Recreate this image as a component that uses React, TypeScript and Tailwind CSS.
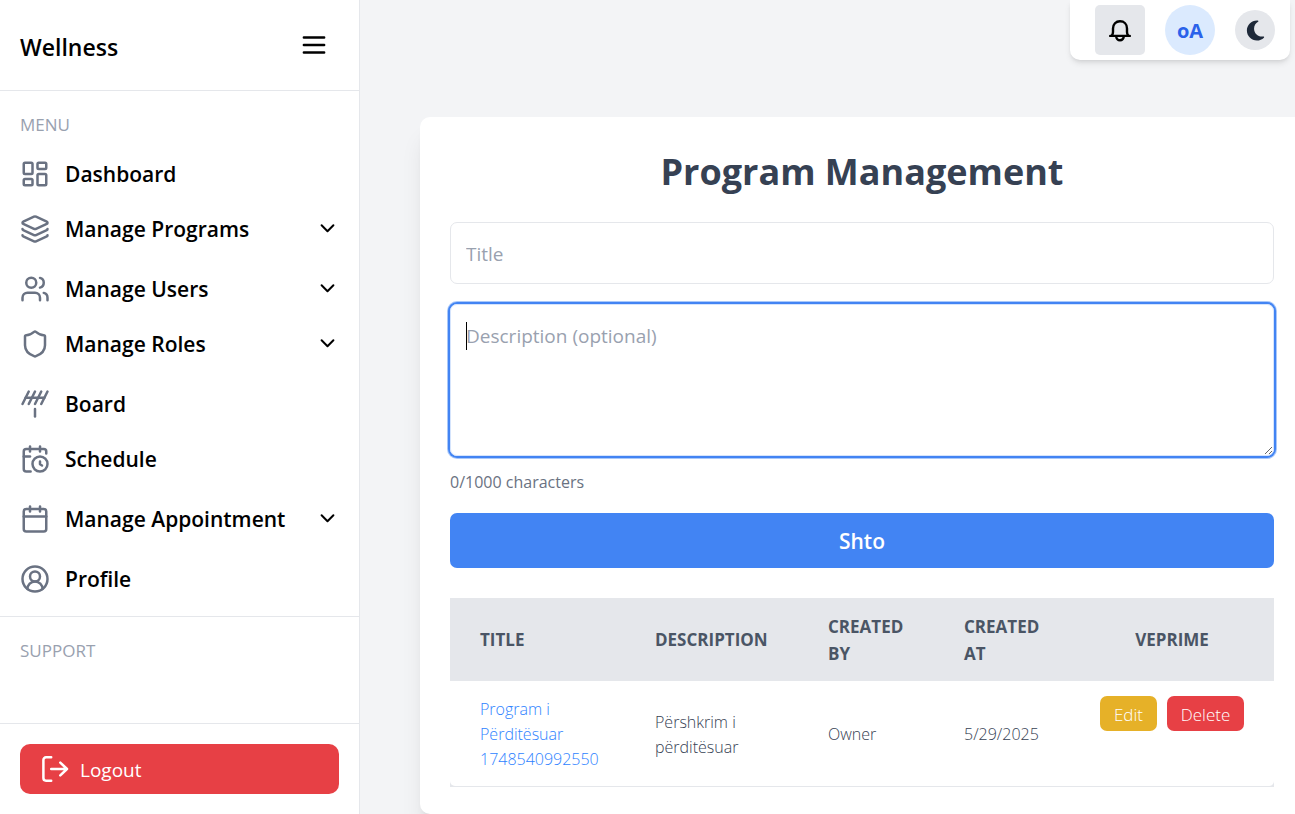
import React from "react";
import {
  Antenna,
  Calendar,
  CalendarClock,
  CircleUserRound,
  Layers,
  LayoutDashboard,
  Shield,
  Users,
  type LucideIcon,
} from "lucide-react";
import { FaMoon } from "react-icons/fa6";

type NavItem = { label: string; icon: LucideIcon; expandable?: boolean };

const navGroups: NavItem[][] = [
  [
    { label: "Dashboard", icon: LayoutDashboard },
    { label: "Manage Programs", icon: Layers, expandable: true },
  ],
  [
    { label: "Manage Users", icon: Users, expandable: true },
    { label: "Manage Roles", icon: Shield, expandable: true },
  ],
  [
    { label: "Board", icon: Antenna },
    { label: "Schedule", icon: CalendarClock },
  ],
  [{ label: "Manage Appointment", icon: Calendar, expandable: true }],
  [{ label: "Profile", icon: CircleUserRound }],
];

const programs = [
  {
    title: "Program i Përditësuar 1748540992550",
    description: "Përshkrim i përditësuar",
    createdBy: "Owner",
    createdAt: "5/29/2025",
  },
];

function MenuIcon() {
  return (
    <svg className="size-[30px]" viewBox="0 0 24 24" fill="none" stroke="currentColor" strokeWidth="2" strokeLinecap="round" aria-hidden="true">
      <path d="M3.9 6h16.2M3.9 12h16.2M3.9 18h16.2" />
    </svg>
  );
}

function ChevronIcon() {
  return (
    <svg className="size-5 shrink-0" viewBox="0 0 20 20" fill="none" stroke="currentColor" strokeWidth="2" strokeLinecap="round" strokeLinejoin="round" aria-hidden="true">
      <path d="M2.6 6.3 8.5 12.2 14.4 6.3" />
    </svg>
  );
}

function BellIcon() {
  return (
    <svg className="size-[30px]" viewBox="0 0 30 30" fill="none" stroke="currentColor" strokeWidth="2.4" strokeLinecap="round" strokeLinejoin="round" aria-hidden="true">
      <path d="M5.2 20.9h19.6M6.8 20.6C7.7 19.6 8 18.4 8 17v-3.6C8 9.2 10.9 6.3 15 6.3s7 2.9 7 7.1V17c0 1.4.3 2.6 1.2 3.6" />
      <path d="M11.2 21.3a3.8 4 0 0 0 7.6 0" />
    </svg>
  );
}

function LogoutIcon() {
  return (
    <svg className="size-[30px]" viewBox="0 0 30 30" fill="none" stroke="currentColor" strokeWidth="2.5" strokeLinecap="round" strokeLinejoin="round" aria-hidden="true">
      <path d="M11.2 3.3H6a2.6 2.6 0 0 0-2.6 2.6v18.2a2.6 2.6 0 0 0 2.6 2.6h5.2" />
      <path d="M11.2 15H27M20.3 8.6 27 15l-6.700 6.400" />
    </svg>
  );
}

function Sidebar() {
  return (
    <aside className="flex w-[360px] shrink-0 flex-col border-r border-gray-200 bg-white text-black">
      <div className="flex h-[91px] items-center justify-between border-b border-gray-200 pr-[30px] pl-5">
        <span className="pt-1 text-[23px] leading-8 font-semibold">Wellness</span>
        <button type="button" aria-label="Toggle menu">
          <MenuIcon />
        </button>
      </div>

      <nav aria-label="Main" className="px-5 pt-5 pb-3">
        <h2 className="mb-[10px] text-[17px] leading-7 text-gray-400">MENU</h2>
        <ul className="flex flex-col gap-[10px]">
          {navGroups.map((group) => (
            <li key={group[0].label}>
              <ul className="flex flex-col gap-[5px]">
                {group.map(({ label, icon: Icon, expandable }) => (
                  <li key={label}>
                    {expandable ? (
                      <button type="button" className="flex h-[50px] w-full items-center gap-[15px] text-left">
                        <Icon size={30} className="shrink-0 text-gray-500" />
                        <span className="flex-1 text-[21px] leading-8 font-semibold whitespace-nowrap">{label}</span>
                        <ChevronIcon />
                      </button>
                    ) : (
                      <a href="#" className="flex h-[50px] items-center gap-[15px]">
                        <Icon size={30} className="shrink-0 text-gray-500" />
                        <span className="text-[21px] leading-8 font-semibold">{label}</span>
                      </a>
                    )}
                  </li>
                ))}
              </ul>
            </li>
          ))}
        </ul>
      </nav>

      <section className="flex-1 border-t border-gray-200 px-5 pt-5">
        <h2 className="text-[17px] leading-7 text-gray-400">SUPPORT</h2>
      </section>

      <div className="border-t border-gray-200 p-5">
        <button type="button" className="flex h-[50px] w-full items-center gap-[10px] rounded-[10px] bg-[#e74045] px-5 text-white">
          <LogoutIcon />
          <span className="pt-0.5 text-[19px] leading-7">Logout</span>
        </button>
      </div>
    </aside>
  );
}

function TopBar() {
  return (
    <header className="flex justify-end pr-[5px]">
      <div className="flex h-[60px] items-center gap-5 rounded-b-[10px] bg-white pr-[15px] pl-[25px] shadow-md">
        <button type="button" aria-label="Notifications" className="flex size-[50px] items-center justify-center rounded-[5px] bg-gray-200 text-black">
          <BellIcon />
        </button>
        <button type="button" aria-label="Account" className="flex size-[50px] items-center justify-center rounded-full bg-blue-100 pt-0.5 text-[20px] font-bold text-[#2b62ea]">
          oA
        </button>
        <button type="button" aria-label="Dark mode" className="flex size-10 items-center justify-center rounded-full bg-gray-200 text-gray-800">
          <FaMoon size={23} />
        </button>
      </div>
    </header>
  );
}

function ProgramForm() {
  return (
    <form className="flex flex-col" onSubmit={(event) => event.preventDefault()}>
      <input
        type="text"
        aria-label="Title"
        placeholder="Title"
        className="h-[62px] w-full rounded-[7px] border border-gray-200 px-[15px] pt-0.5 text-[19px] placeholder:text-gray-400 focus:outline-none"
      />
      <div className="relative mt-5 flex">
        <textarea
          aria-label="Description"
          placeholder="Description (optional)"
          className="h-[152px] w-full rounded-[7px] border border-[#d5e4fc] px-[15px] py-4 text-[19px] leading-[30px] caret-transparent shadow-[0_0_0_2px_#4284f3,0_0_0_3px_#a9c8fa] outline-none placeholder:text-gray-400"
        />
        <span className="absolute top-[18px] left-4 h-7 w-px bg-black" aria-hidden="true" />
      </div>
      <p className="mt-3 text-[16px] leading-7 text-gray-500">0/1000 characters</p>
      <button type="submit" className="mt-[17px] h-[55px] w-full rounded-[7px] bg-[#4284f3] pt-0.5 text-[21px] font-semibold text-white">
        Shto
      </button>
    </form>
  );
}

function ProgramTable() {
  return (
    <div className="mt-[30px] border-b border-gray-200 bg-gray-200">
      <table className="w-full table-fixed border-collapse">
        <thead>
          <tr className="h-[83px] text-left text-[17px] leading-[27px] text-gray-600 uppercase">
            <th scope="col" className="w-[175px] pl-[30px] font-bold">Title</th>
            <th scope="col" className="w-[173px] pl-[30px] font-bold">Description</th>
            <th scope="col" className="w-[136px] pl-[30px] pr-5 font-bold">Created By</th>
            <th scope="col" className="w-[136px] pl-[30px] pr-5 font-bold">Created At</th>
            <th scope="col" className="px-[30px] text-center font-bold">Veprime</th>
          </tr>
        </thead>
        <tbody>
          {programs.map((program) => (
            <tr key={program.title} className="text-[16px] leading-[25px] font-light text-gray-700">
              <td className="rounded-bl-[5px] bg-white pt-4 pr-[25px] pb-[14px] pl-[30px]">
                <a href="#" className="text-blue-500">{program.title}</a>
              </td>
              <td className="bg-white px-[30px] pt-4 pb-[14px]">{program.description}</td>
              <td className="bg-white px-[30px] pt-4 pb-[14px]">{program.createdBy}</td>
              <td className="bg-white pt-4 pb-[14px] pl-[30px]">{program.createdAt}</td>
              <td className="rounded-br-[5px] bg-white px-[30px] py-[15px] align-top">
                <div className="flex gap-[10px] text-[17px] text-white">
                  <button type="button" className="h-[35px] w-[57px] rounded-[7px] bg-[#e6b128] pt-0.5">Edit</button>
                  <button type="button" className="h-[35px] w-[77px] rounded-[7px] bg-[#e74045] pt-0.5">Delete</button>
                </div>
              </td>
            </tr>
          ))}
        </tbody>
      </table>
    </div>
  );
}

export default function App() {
  return (
    <div className="flex min-h-screen bg-gray-100 font-['Open_Sans',sans-serif]">
      <Sidebar />
      <div className="flex min-w-0 flex-1 flex-col">
        <TopBar />
        <main className="mt-[57px] ml-[60px] flex-1 rounded-l-[10px] bg-white pt-[30px] pr-[21px] pb-[27px] pl-[30px] shadow-xl">
          <h1 className="mb-[25px] text-center text-[36px] leading-[50px] font-bold text-gray-700">Program Management</h1>
          <ProgramForm />
          <ProgramTable />
        </main>
      </div>
    </div>
  );
}
